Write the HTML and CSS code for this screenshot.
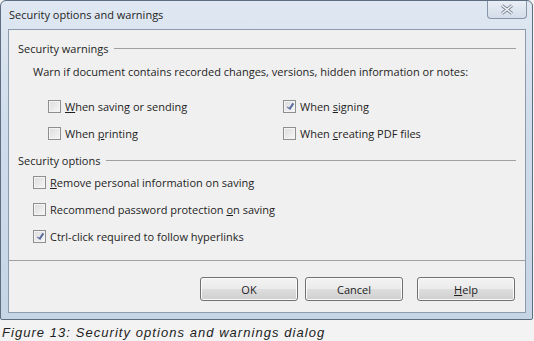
FILE: index.html
```html
<!DOCTYPE html>
<html>
<head>
    <title>Security options and warnings</title>
    <meta charset="UTF-8">
    <link rel="stylesheet" href="styles.css">
</head>
<body>
    <div class="window">
        <div class="titlebar">
            <span class="title">Security options and warnings</span>
            <div class="close-btn">
                <svg width="16" height="11" viewBox="0 0 16 11">
                    <path d="M3 1.5 L13 9.5 M13 1.5 L3 9.5" stroke="#7d8796" stroke-width="3.2" fill="none"/>
                    <path d="M3 1.5 L13 9.5 M13 1.5 L3 9.5" stroke="#f4f6f9" stroke-width="1.4" fill="none"/>
                </svg>
            </div>
        </div>
        <div class="client">
            <div class="group-header"><span>Security warnings</span><div class="rule"></div></div>
            <div class="warn-text">Warn if document contains recorded changes, versions, hidden information or notes:</div>
            <div class="warn-grid">
                <label class="check"><span class="box"></span><span><u>W</u>hen saving or sending</span></label>
                <label class="check"><span class="box checked"></span><span>When <u>s</u>igning</span></label>
                <label class="check"><span class="box"></span><span>When <u>p</u>rinting</span></label>
                <label class="check"><span class="box"></span><span>When <u>c</u>reating PDF files</span></label>
            </div>
            <div class="group-header second"><span>Security options</span><div class="rule"></div></div>
            <div class="options">
                <label class="check"><span class="box"></span><span><u>R</u>emove personal information on saving</span></label>
                <label class="check"><span class="box"></span><span>Recommend password protection <u>o</u>n saving</span></label>
                <label class="check"><span class="box checked"></span><span>Ctrl-click required to follow hyperlinks</span></label>
            </div>
            <div class="separator"></div>
            <div class="buttons">
                <div class="button">OK</div>
                <div class="button">Cancel</div>
                <div class="button help"><u>H</u>elp</div>
            </div>
        </div>
    </div>
    <p class="caption">Figure 13: Security options and warnings dialog</p>
</body>
</html>
```

FILE: styles.css
```css
body {
    margin: 0;
    background-color: #f3f3f3;
    font-family: "Open Sans", "Noto Sans", sans-serif;
    font-size: 11px;
    color: #1e1e1e;
}
.window {
    width: 533px;
    height: 320px;
    border: 1px solid #5e6e80;
    border-radius: 6px 6px 2px 2px;
    background: linear-gradient(to bottom, #dfe8f2 0%, #cfdceb 40%, #c6d5e6 100%);
    padding: 0 6px 6px 7px;
    box-sizing: border-box;
    display: flex;
    flex-direction: column;
}
.titlebar {
    height: 28px;
    display: flex;
    justify-content: space-between;
    align-items: flex-start;
}
.title {
    margin-top: 6px;
    margin-left: 1px;
    font-size: 11px;
}
.close-btn {
    width: 38px;
    height: 17px;
    margin-right: -1px;
    border: 1px solid #8795a8;
    border-top: none;
    border-radius: 0 0 4px 4px;
    background: linear-gradient(to bottom, #e9eef5, #d3dde9);
    display: flex;
    align-items: center;
    justify-content: center;
}
.client {
    flex: 1;
    background-color: #f0f0f0;
    border: 1px solid #8d9aab;
    display: flex;
    flex-direction: column;
    padding: 10px 9px 0 9px;
}
.group-header {
    height: 16px;
    display: flex;
    align-items: center;
    gap: 6px;
}
.group-header.second {
    margin-top: 9px;
}
.rule {
    flex: 1;
    height: 1px;
    background-color: #a0a0a0;
    margin-top: 1px;
}
.warn-text {
    height: 16px;
    margin-top: 8px;
    margin-left: 15px;
    line-height: 16px;
}
.warn-grid {
    margin-top: 16px;
    margin-left: 30px;
    display: grid;
    grid-template-columns: 235px 1fr;
    row-gap: 7px;
}
.check {
    height: 20px;
    display: flex;
    align-items: center;
    gap: 4px;
}
.box {
    width: 11px;
    height: 11px;
    border: 1px solid #8e8f8f;
    background: linear-gradient(135deg, #dcdcdc, #f6f6f6);
    box-shadow: inset 0 0 0 1px #f4f4f4;
    display: inline-flex;
    align-items: center;
    justify-content: center;
}
.box.checked::after {
    content: "";
    width: 2px;
    height: 6px;
    border-right: 2px solid #5a6ca0;
    border-bottom: 1px solid #5a6ca0;
    transform: rotate(35deg) translate(0, -1px);
}
.options {
    margin-top: 4px;
    margin-left: 15px;
    display: flex;
    flex-direction: column;
    gap: 7px;
}
.separator {
    height: 1px;
    background-color: #a0a0a0;
    margin: 14px -9px 0 -9px;
}
.buttons {
    margin-top: 16px;
    margin-right: 1px;
    display: flex;
    justify-content: flex-end;
    gap: 7px;
}
.button {
    width: 96px;
    height: 22px;
    border: 1px solid #707070;
    border-radius: 3px;
    background: linear-gradient(to bottom, #f3f3f3 0%, #ebebeb 48%, #dddddd 52%, #cfcfcf 100%);
    box-shadow: inset 0 0 0 1px #fbfbfb;
    display: flex;
    align-items: center;
    justify-content: center;
}
.button.help {
    margin-left: 7px;
}
.caption {
    margin: 5px 0 0 2px;
    font-family: "Liberation Sans", Arial, sans-serif;
    font-style: italic;
    font-size: 13px;
    letter-spacing: 1.05px;
    color: #222;
}
```
